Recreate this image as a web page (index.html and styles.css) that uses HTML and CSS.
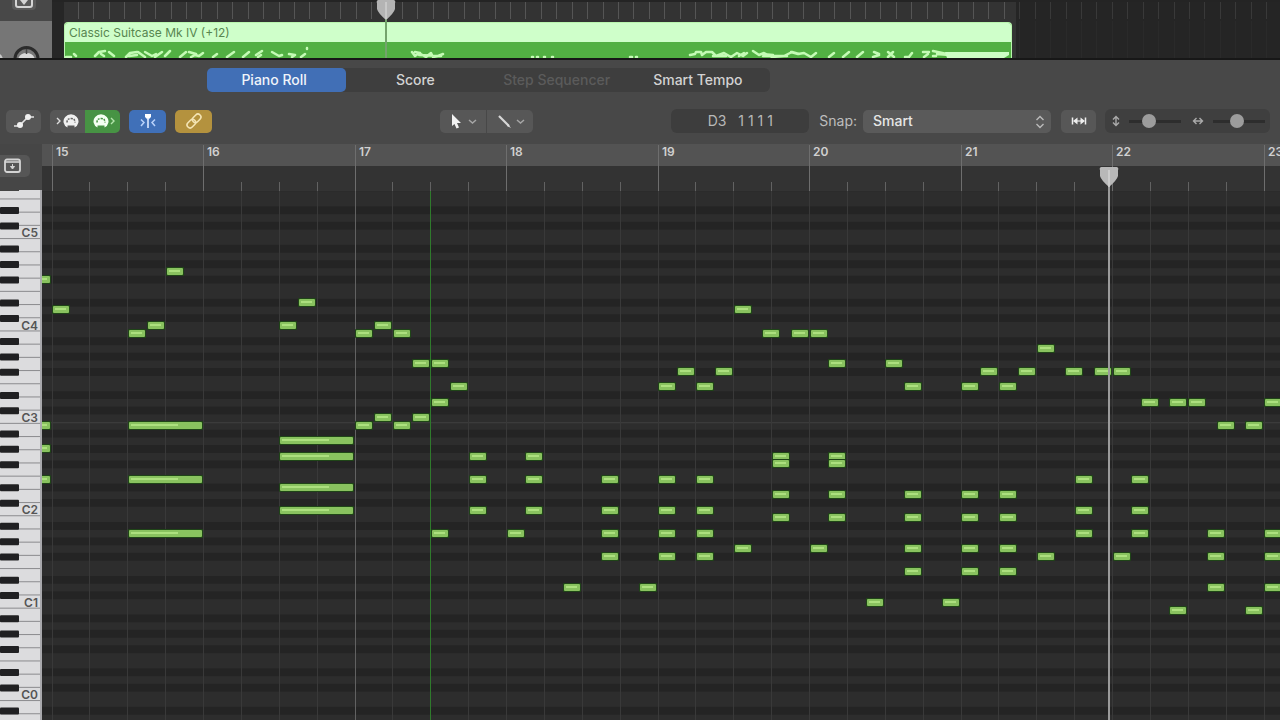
FILE: index.html
```html
<!DOCTYPE html>
<html lang="en">
<head>
<meta charset="utf-8">
<title>Piano Roll</title>
<link rel="stylesheet" href="styles.css">
</head>
<body>
<main class="app">
  <section class="tracks" aria-label="Tracks">
    <div class="track-side">
      <div class="track-top">
        <button class="track-button" aria-label="Catch playhead"><svg width="18" height="10" viewBox="0 0 18 10"><path d="M1 0v5a2 2 0 0 0 2 2h12a2 2 0 0 0 2-2V0" fill="none" stroke="#d4d4d4" stroke-width="2"/><path d="M5 0h8L9 5z" fill="#d4d4d4"/></svg></button>
      </div>
      <div class="track-head">
        <svg width="52" height="38" viewBox="0 0 52 38"><circle cx="26.500" cy="38" r="11.500" fill="#777" stroke="#2b2b2b" stroke-width="3"/><path d="M18 38a9 9 0 0 1 17 0z" fill="#d8d8d8"/><path d="M26.500 28v5" stroke="#444" stroke-width="1.500"/><path d="M0 33q2 1 3 5H0z" fill="#c8c8c8"/></svg>
      </div>
    </div>
    <div class="arrange">
      <svg class="arrange-grid" id="arrange-grid" aria-hidden="true"></svg>
      <div class="region">
        <div class="region-name">Classic Suitcase Mk IV (+12)</div>
        <svg class="region-notes" viewBox="64 42 948 16" width="948" height="16" aria-hidden="true">
          <g fill="none" stroke="#c4fbb5" stroke-width="2.500" stroke-linecap="round" stroke-linejoin="round">
            <path d="M65 57h5M73 54l2 2"/>
            <path d="M94 56l4-4 6-1M100 54l3 2M108 52l5 4M125 57l4-4 7-1M128 56l8-1M137 52l7 5M144 52l7 4 4-2M154 57l7-5M164 56l5-5"/>
            <path d="M179 57l6-5M188 52l7 2M190 57l4-2 4 1 4-3M212 57l4-3M226 57l7-5M242 57l6-5M255 55l6-4M257 57l3-2M271 52l7 4 3-1M288 54l6 1-3 2M300 57l4-3M306 48v1"/>
            <path d="M411 52l3 4 4-3 7 4 5-4 2 4 5-1 5-2M414 52l5 1M418 55l22 1M531 57h1M536 57h1M543 57h1M551 57h1M629 57h2M635 57h1"/>
            <path d="M689 55l5-1 1-2h5l1 3 4-3h6l4 4 8-3 7 4 6-4 6 3 4-3M752 51l6 4 5-2 8 4 12-1 8-4 7 2M790 52l7 2 6-1 7 4 5-4M761 54l11 1M712 56h13M762 56h24M738 56l5-3"/>
            <path d="M828 57l5-4M842 57l6-5M856 57l6-5M872 57l6-2M873 52l5 2M887 52l6 5M887 57l5-5M904 57h4l3-4M922 52h6M923 57l4-3M932 51l14 3M936 54l12 1M932 56l3 0"/>
          </g>
          <path d="M944 52h64v3l-5 3h-57z" fill="#ccffc4"/>
        </svg>
      </div>
      <svg class="arrange-playhead" width="20" height="58" viewBox="0 0 20 58" aria-hidden="true"><path d="M10 18v40" stroke="#74a36c" stroke-width="2"/><path d="M1 3a2 2 0 0 1 2-3h14a2 2 0 0 1 2 3v6q-1 4-9 11Q2 13 1 9z" fill="#b4b4b4"/><path d="M10 2v17" stroke="#ddd"/></svg>
    </div>
  </section>

  <header class="editor-head">
    <nav class="tabs" aria-label="Editors">
      <button class="tab active">Piano Roll</button>
      <button class="tab">Score</button>
      <button class="tab" disabled>Step Sequencer</button>
      <button class="tab">Smart Tempo</button>
    </nav>
    <div class="toolbar">
      <div class="tool-set">
        <button class="tool" aria-label="Automation"><svg width="22" height="18" viewBox="0 0 22 18"><path d="M1 14h5L15 5h6" fill="none" stroke="#e4e4e4" stroke-width="1.600"/><circle cx="7" cy="13" r="3" fill="#f0f0f0"/><circle cx="15" cy="5" r="3" fill="#f0f0f0"/></svg></button>
        <div class="pair">
          <button class="tool" aria-label="MIDI in"><svg width="26" height="18" viewBox="0 0 26 18"><path d="M2 6l3 3-3 3" fill="none" stroke="#ddd" stroke-width="1.400"/><path d="M12.500 15.500a7.500 7 0 1 1 7 0v-2h-7z" fill="#f0f0f0"/><path d="M12 10.500q0-4 4-4t4 4" fill="none" stroke="#666" stroke-width="1.500" stroke-dasharray="2 1"/></svg></button>
          <button class="tool green" aria-label="MIDI out"><svg width="26" height="18" viewBox="0 0 26 18"><path d="M21 6l3 3-3 3" fill="none" stroke="#b5e5ad" stroke-width="1.400"/><path d="M7.500 15.500a7.500 7 0 1 1 7 0v-2h-7z" fill="#f4fff2"/><path d="M7 10.500q0-4 4-4t4 4" fill="none" stroke="#479344" stroke-width="1.500" stroke-dasharray="2 1"/></svg></button>
        </div>
        <button class="tool blue" aria-label="Catch"><svg width="18" height="18" viewBox="0 0 18 18"><path d="M6 2h6v3L9 8 6 5z" fill="#fff"/><path d="M9 6v10" stroke="#dce9ff" stroke-width="1.600"/><path d="M2 7.500L5 10.500l-3 3.500M16 7.500L13 10.500l3 3.500" fill="none" stroke="#b9d2fa" stroke-width="1.500"/></svg></button>
        <button class="tool gold" aria-label="Link"><svg width="20" height="18" viewBox="0 0 20 18"><g fill="none" stroke="#f4e4b4" stroke-width="1.600" transform="rotate(-45 10 9)"><rect x="1.500" y="6" width="9.500" height="6" rx="3"/><rect x="9" y="6" width="9.500" height="6" rx="3"/></g></svg></button>
      </div>
      <div class="pair pointer-tools">
        <button class="tool" aria-label="Pointer tool"><svg width="32" height="18" viewBox="0 0 32 18"><path d="M5 2l9 9h-4l2 4.500-2.500 1L7.500 12 5 14z" fill="#f2f2f2"/><path d="M22 8l3.500 3L29 8" fill="none" stroke="#a6a6a6" stroke-width="1.500"/></svg></button>
        <button class="tool" aria-label="Pencil tool"><svg width="32" height="18" viewBox="0 0 32 18"><path d="M5 4l10 10" stroke="#d6d6d6" stroke-width="2.200"/><path d="M14 12l3 4-4-2z" fill="#ddd"/><path d="M23 8l3.500 3L30 8" fill="none" stroke="#a6a6a6" stroke-width="1.500"/></svg></button>
      </div>
      <output class="position">D3 &nbsp; 1 1 1 1</output>
      <label class="snap-label" for="snap">Snap:</label>
      <div class="select-box">
        <select id="snap"><option>Smart</option></select>
        <svg class="select-arrows" width="10" height="14" viewBox="0 0 10 14"><path d="M1.500 5L5 1.500 8.500 5M1.500 9L5 12.500 8.500 9" fill="none" stroke="#bbb" stroke-width="1.400"/></svg>
      </div>
      <button class="tool fit" aria-label="Fit horizontally"><svg width="16" height="10" viewBox="0 0 16 10"><path d="M1.500 1.500v7M14.500 1.500v7" stroke="#eee" stroke-width="1.500"/><path d="M2 5l4.500-3.500v7zM14 5L9.500 1.500v7z" fill="#eee"/><path d="M6 5h4" stroke="#eee" stroke-width="1.200"/></svg></button>
      <div class="zoomers">
        <svg width="8" height="12" viewBox="0 0 8 12"><path d="M1 4.500L4 1.500l3 3M1 7.500l3 3 3-3M4 2v8" fill="none" stroke="#aaa" stroke-width="1.400"/></svg>
        <input type="range" aria-label="Vertical zoom" min="0" max="100" value="34">
        <svg class="second" width="12" height="8" viewBox="0 0 12 8"><path d="M4.500 1L1.500 4l3 3M7.500 1l3 3-3 3M2 4h8" fill="none" stroke="#aaa" stroke-width="1.400"/></svg>
        <input type="range" aria-label="Horizontal zoom" min="0" max="100" value="44">
      </div>
    </div>
  </header>

  <section class="editor" aria-label="Piano roll">
    <div class="side">
      <div class="side-head"><button class="mode" aria-label="Collapse mode"><svg width="18" height="16" viewBox="0 0 18 16"><rect x="1" y="1.500" width="15" height="12.500" rx="2" fill="none" stroke="#d4d4d4" stroke-width="1.800"/><path d="M1 4h15" stroke="#d4d4d4" stroke-width="1.600"/><path d="M8.500 6v3M6.500 8.500h4l-2 2.500z" fill="#d4d4d4" stroke="#d4d4d4" stroke-width="1"/></svg></button></div>
      <svg class="keys" id="keys" aria-label="Keyboard"></svg>
    </div>
    <div class="score">
      <svg class="ruler" id="ruler" aria-label="Bar ruler"></svg>
      <svg class="grid" id="grid" aria-label="Notes"></svg>
      <svg class="playhead" width="20" height="100%" aria-hidden="true"><path d="M10 18v2000" stroke="#9b9b9b" stroke-width="2"/><path d="M1 3a2 2 0 0 1 2-3h14a2 2 0 0 1 2 3v6q-1 4-9 11Q2 13 1 9z" fill="#b8b8b8"/><path d="M10 3v17" stroke="#e0e0e0"/></svg>
    </div>
  </section>
</main>
<script src="roll.js"></script>
</body>
</html>
```
FILE: styles.css
```css
* { box-sizing: border-box; }
body {
  margin: 0;
  background: #2b2b2b;
  color: #d2d2d2;
  font: 14px/20px Inter, "Liberation Sans", sans-serif;
}
button, select, input { font: inherit; color: inherit; margin: 0; }
button { border: 0; padding: 0; display: flex; align-items: center; justify-content: center; }
svg { display: block; flex: none; }

.app { display: flex; flex-direction: column; height: 100vh; overflow: hidden; }

.tracks { display: flex; height: 60px; flex: none; overflow: hidden; border-bottom: 2px solid #171717; }
.track-side { width: 52px; flex: none; background: #767676; }
.track-top { height: 21px; background: #484848; padding-left: 12px; }
.track-button { width: 24px; height: 10px; background: #5a5a5a; border-radius: 0 0 4px 4px; align-items: flex-start; }
.track-head { height: 37px; overflow: hidden; }
.arrange { position: relative; flex: 1; background: #252525; padding: 22px 0 0 12px; overflow: hidden; }
.arrange-grid { position: absolute; inset: 0; width: 100%; height: 100%; }
.region { position: relative; width: 948px; height: 36px; border-radius: 4px 4px 0 0; overflow: hidden; background: #52b043; border: 1px solid #b9f5ae; border-bottom: 0; }
.region-name { height: 19px; padding-left: 4px; background: #cfffca; color: #578650; font-size: 12px; line-height: 19px; }
.arrange-playhead { position: absolute; left: 324px; top: 0; }

.editor-head { flex: none; background: #484848; padding: 8px 10px 11px 6px; }
.tabs { display: grid; grid-template-columns: repeat(4, 1fr); gap: 2px; width: 563px; max-width: 100%; margin-left: 201px; background: #3e3e3e; border-radius: 6px; }
.tab { height: 24px; background: none; border-radius: 5px; font-weight: 500; padding-right: 5px; }
.tab.active { background: #416fb6; color: #f0f4fa; }
.tab:disabled { color: #5b5b5b; }
.toolbar { display: flex; align-items: center; margin-top: 17px; height: 24px; }
.tool-set { display: flex; gap: 9px; width: 434px; }
.tool { width: 35px; height: 23px; background: #575757; border-radius: 5px; }
.pair { display: flex; }
.pair .tool:first-child { border-radius: 5px 0 0 5px; }
.pair .tool:last-child { border-radius: 0 5px 5px 0; }
.tool.green { background: #479344; }
.tool.blue { width: 37px; background: #4070b8; }
.tool.gold { width: 37px; background: #b4923e; }
.pointer-tools { gap: 1px; }
.pointer-tools .tool { width: 46px; }
.position { margin-left: auto; width: 138px; height: 24px; background: #3d3d3d; border-radius: 6px; text-align: center; line-height: 23px; color: #b8b8b8; }
.snap-label { margin: 0 6px 0 10px; color: #bdbdbd; }
.select-box { position: relative; width: 188px; }
.select-box select { appearance: none; display: block; width: 100%; height: 23px; padding: 0 10px; border: 0; border-radius: 5px; background: #5a5a5a; color: #e6e6e6; font-weight: 500; }
.select-arrows { position: absolute; right: 6px; top: 5px; }
.fit { margin: 0 9px 0 10px; }
.zoomers { display: flex; align-items: center; width: 165px; height: 24px; padding: 0 7px; background: #3f3f3f; border-radius: 6px; }
.zoomers input { appearance: none; width: 52px; height: 14px; margin-left: 9px; background: linear-gradient(#2d2d2d, #2d2d2d) center / 100% 3px no-repeat; }
.zoomers input::-webkit-slider-thumb { appearance: none; width: 14px; height: 14px; border-radius: 50%; background: #9c9c9c; }
.zoomers .second { margin-left: 11px; }

.editor { display: flex; flex: 1; min-height: 0; }
.side { display: flex; flex-direction: column; width: 42px; flex: none; background: #464646; }
.side-head { height: 46px; flex: none; padding-top: 11px; }
.mode { width: 30px; height: 22px; background: #565656; border-radius: 0 5px 5px 0; padding-right: 4px; }
.keys { width: 100%; flex: 1; min-height: 0; background: #dcdcde; }
.score { position: relative; display: flex; flex-direction: column; flex: 1; min-width: 0; }
.ruler { width: 100%; height: 47px; background: #333; }
.grid { width: 100%; flex: 1; min-height: 0; background: #2d2d2d; }
.playhead { position: absolute; left: 1057px; top: 23px; }
svg text { font-family: Inter, "Liberation Sans", sans-serif; }
.bar-number { font-size: 12px; font-weight: 600; fill: #d0d0d0; }
.key-name { font-size: 12px; font-weight: 600; fill: #555; }
```
FILE: roll.js
```js
const NS = "http://www.w3.org/2000/svg";
const SPAN = 2600;      // drawn width, wider than most windows
const SEMI = 7.7;       // row height
const ORIGIN = 227.2;   // centre of the C3 row
const KEY_ORIGIN = 229; // centre of the C3 key
const BAR = 151.5;
const FIRST = 10;       // x of bar 15

function add(parent, name, attrs, text) {
  const el = document.createElementNS(NS, name);
  for (const k in attrs) el.setAttribute(k, attrs[k]);
  if (text !== undefined) el.textContent = text;
  parent.appendChild(el);
  return el;
}
const rect = (p, x, y, w, h, fill, rx = 0) => add(p, "rect", { x, y, width: w, height: h, fill, rx });

// arrange area
const arrange = document.getElementById("arrange-grid");
rect(arrange, 12, 0, 952, 58, "#333");
rect(arrange, 0, 0, 12, 58, "#262626");
for (let i = 0, x = 26; x < SPAN; i++, x = 26 + i * 15.43) {
  rect(arrange, Math.round(x), 2, 1, 17, x < 964 ? "#555" : "#393939");
  if (x > 964) rect(arrange, Math.round(x), 21, 1, 40, "#2a2a2a");
}
rect(arrange, 0, 0, SPAN, 2, "#242424");

// bar ruler
const ruler = document.getElementById("ruler");
rect(ruler, 0, 0, SPAN, 22, "#535353");
for (let b = 0; FIRST + b * BAR < ruler.clientWidth; b++) {
  const x = Math.floor(FIRST + b * BAR);
  rect(ruler, x, 1, 1, 46, "#6e6e6e");
  for (let q = 1; q < 4; q++) rect(ruler, Math.floor(FIRST + b * BAR + q * BAR / 4), 38, 1, 9, "#626262");
  add(ruler, "text", { x: x + 4, y: 12, class: "bar-number" }, 15 + b);
}

// rows and keyboard
const grid = document.getElementById("grid");
const keys = document.getElementById("keys");
const keyHeight = keys.clientHeight;
const BLACK = [1, 3, 6, 8, 10];
for (let s = -80; s < 32; s++) {
  const pc = ((s % 12) + 12) % 12;
  const y = ORIGIN - s * SEMI - SEMI / 2;
  if (BLACK.includes(pc)) rect(grid, 0, y, SPAN, SEMI, "#242424");
}
rect(grid, 0, ORIGIN + 4, SPAN, 1, "#404040");
rect(keys, 40, 0, 2, SPAN, "#a8a8ac");
for (let k = -46; k < 20; k++) rect(keys, 0, KEY_ORIGIN + SEMI / 2 - k * 13.2, 40, 1, "#8b8b8e");
for (let s = -80; s < 30; s++) {
  const pc = ((s % 12) + 12) % 12;
  const y = KEY_ORIGIN - s * SEMI;
  if (BLACK.includes(pc)) rect(keys, 0, y - 4, 19, 7, "#202022", 1);
  if (pc === 0 && y > 0 && y < keyHeight) {
    add(keys, "text", { x: 38, y: y + 3, "text-anchor": "end", class: "key-name" }, "C" + (3 + s / 12));
  }
}
rect(keys, 0, 0, 19, 1, "#444");

// vertical lines; the middle of bar 17 carries the green marker
for (let i = 0; i < 68; i++) {
  if (i === 10) continue;
  rect(grid, Math.floor(FIRST + i * BAR / 4), 0, 1, SPAN, i === 8 ? "#626262" : "#393939");
}
const bar17mid = Math.floor(FIRST + 2.5 * BAR);
rect(grid, bar17mid, 0, 1, SPAN, "#2f7a2c");

// notes: rows below C3 (negative = above) -> sixteenth positions from bar 15
const shorts = {
  "-19": [12], "-18": [-2], "-15": [26], "-14": [0, 72],
  "-12": [10, 24, 34], "-11": [8, 32, 36, 75, 78, 80], "-9": [104],
  "-7": [38, 40, 82, 88], "-6": [66, 70, 98, 102, 107, 110, 112],
  "-4": [42, 64, 68, 90, 96, 100], "-2": [40, 115, 118, 120, 128],
  "0": [34, 38], "1": [-2, 32, 36, 123, 126], "4": [-2],
  "5": [44, 50, 76, 82], "6": [76, 82],
  "8": [-2, 44, 50, 58, 64, 68, 108, 114],
  "10": [76, 82, 90, 96, 100], "12": [44, 50, 58, 64, 68, 108, 114],
  "13": [76, 82, 90, 96, 100],
  "15": [40, 48, 58, 64, 68, 108, 114, 122, 128],
  "17": [72, 80, 90, 96, 100], "18": [58, 64, 68, 104, 112, 122, 128],
  "20": [90, 96, 100], "22": [54, 62, 122, 128], "24": [86, 94], "25": [118, 126]
};
const longs = [[8, 1], [8, 8], [8, 15], [24, 3], [24, 5], [24, 9], [24, 12]];

function note(step, row, w) {
  const x = Math.round(FIRST + step * BAR / 16);
  const y = Math.round(ORIGIN + row * SEMI) - 4;
  rect(grid, x, y - 1, w + 1, 9, "#1f4517", 1);
  rect(grid, x + 1, y, w - 1, 7, "#89c25f", 1);
  rect(grid, x + 3, y + 2, w > 20 ? Math.round(w * 0.64) : w - 6, 2, "#ace07e");
}
for (const row in shorts) shorts[row].forEach(step => note(step, +row, 17));
longs.forEach(([step, row]) => note(step, row, 74));
```
